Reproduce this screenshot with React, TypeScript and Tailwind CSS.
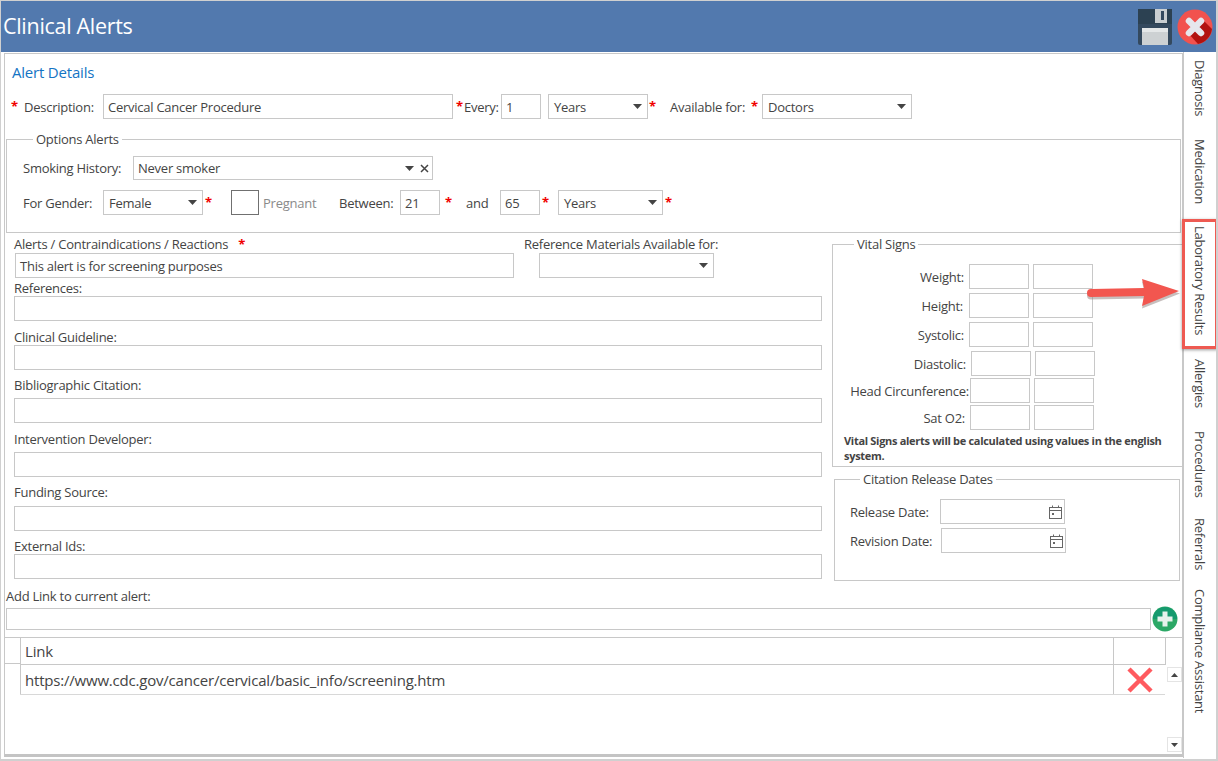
import React from "react";

const box = "border border-[#c8c8c8] bg-white flex items-center shrink-0";

function Star({ className = "" }: { className?: string }) {
  return <span className={"text-[#f00000] font-bold text-[13px] leading-none shrink-0 " + className}>*</span>;
}
function Caret({ className = "" }: { className?: string }) {
  return (
    <svg width="9" height="5" viewBox="0 0 9 5" className={"shrink-0 " + className}>
      <path d="M0 0h9L4.5 5z" fill="#444" />
    </svg>
  );
}
function Input({ className, value = "" }: { className: string; value?: string }) {
  return <div className={box + " pl-[4px] " + className}>{value}</div>;
}
function Select({ className, value = "" }: { className: string; value?: string }) {
  return (
    <div className={box + " pl-[5px] pr-[5px] justify-between " + className}>
      <span>{value}</span>
      <Caret />
    </div>
  );
}
function Cal() {
  return (
    <svg width="13" height="14" viewBox="0 0 13 14" fill="none" stroke="#666" strokeWidth="1">
      <rect x="0.5" y="2.5" width="12" height="11" />
      <path d="M0.5 5.5h12M3.5 0.5v2M9.5 0.5v2" />
      <rect x="3" y="8" width="2" height="2" fill="#666" stroke="none" />
    </svg>
  );
}
function Field({ label, top, gap }: { label: string; top: string; gap: string }) {
  return (
    <>
      <div className={"h-[16px] leading-[16px] " + top}>{label}</div>
      <div className={"h-[25px] w-[808px] border border-[#c8c8c8] bg-white " + gap} />
    </>
  );
}

const vitals = [
  { label: "Weight:", w: "w-[120px]", ml: "ml-[5px]", row: "mt-0" },
  { label: "Height:", w: "w-[119px]", ml: "ml-[6px]", row: "mt-[4px]" },
  { label: "Systolic:", w: "w-[120px]", ml: "ml-[5px]", row: "mt-[4px]" },
  { label: "Diastolic:", w: "w-[122px]", ml: "ml-[5px]", row: "mt-[4px]" },
  { label: "Head Circunference:", w: "w-[125px]", ml: "ml-[1px]", row: "mt-[2px]" },
  { label: "Sat O2:", w: "w-[121px]", ml: "ml-[5px]", row: "mt-[2px]" },
];
const tabs = [
  { t: "Diagnosis", h: "h-[60px]" },
  { t: "Medication", h: "h-[68px]" },
  { t: "Laboratory Results", h: "h-[114px]" },
  { t: "Allergies", h: "h-[53px]" },
  { t: "Procedures", h: "h-[68px]" },
  { t: "Referrals", h: "h-[52px]" },
  { t: "Compliance Assistant", h: "h-[131px]" },
];

export default function App() {
  return (
    <div className="relative w-[1218px] h-[761px] overflow-hidden bg-white text-[#444] text-[13px] leading-[18px] tracking-[-0.25px] border-t border-l border-r-2 border-b-2 border-[#d0d0d0] font-['Open_Sans','Noto_Sans',sans-serif]">
      <header className="h-[51px] bg-[#5279ae] flex items-center justify-between pl-[2px] pr-[3px]">
        <h1 className="text-white text-[21.5px] font-normal tracking-[-0.3px] leading-[30px] -mt-[1px]">Clinical Alerts</h1>
        <div className="flex items-center gap-[5px] mt-[1px]">
          <svg width="34" height="36" viewBox="0 0 34 36">
            <rect width="34" height="36" rx="2" fill="#34495e" />
            <rect x="0" y="0" width="34" height="15" fill="#2c4152" />
            <rect x="17" y="0" width="12" height="14" fill="#c9ced1" />
            <rect x="23" y="2" width="3" height="9" fill="#34495e" />
            <path d="M4 21a2 2 0 0 1 2-2h22a2 2 0 0 1 2 2v15H4z" fill="#cdd1d3" />
            <rect x="4" y="19" width="26" height="4" fill="#e4e7e8" />
          </svg>
          <svg width="36" height="36" viewBox="0 0 36 36">
            <circle cx="18" cy="18" r="17.5" fill="#f2524e" />
            <path d="M11 24 L25 10 L35 20 A17.5 17.5 0 0 1 21 35z" fill="#b2120f" />
            <path d="M12 12 L24 24 M24 12 L12 24" stroke="#e6e7ec" strokeWidth="6.5" strokeLinecap="round" />
          </svg>
        </div>
      </header>

      <div className="flex h-[706px]">
        <main className="ml-[3px] mt-[1px] w-[1179px] h-[704px] border border-[#c8c8c8] border-b-[3px] border-b-[#c4c4c4] bg-white flex flex-col shrink-0">
          <h2 className="mt-[8px] ml-[7px] h-[20px] text-[15px] leading-[20px] font-normal text-[#1474c4] tracking-[-0.2px]">Alert Details</h2>

          <div className="mt-[12px] flex items-center h-[25px] whitespace-nowrap">
            <Star className="ml-[6px] w-[13px]" />
            <span className="w-[79px]">Description:</span>
            <Input className="w-[350px] h-[25px]" value="Cervical Cancer Procedure" />
            <Star className="ml-[3px] w-[8px]" />
            <span className="w-[37px]">Every:</span>
            <Input className="w-[40px] h-[25px]" value="1" />
            <Select className="ml-[7px] w-[100px] h-[25px]" value="Years" />
            <Star className="ml-[1px] w-[21px]" />
            <span className="w-[81px]">Available for:</span>
            <Star className="w-[11px]" />
            <Select className="w-[150px] h-[25px]" value="Doctors" />
          </div>

          <fieldset className="mt-[11px] ml-[1px] w-[1175px] h-[103px] border border-[#c8c8c8] pl-[16px]">
            <legend className="ml-[10px] px-[3px] h-[18px] leading-[18px]">Options Alerts</legend>
            <div className="mt-[8px] flex items-center h-[24px] whitespace-nowrap">
              <span className="w-[110px]">Smoking History:</span>
              <div className={box + " w-[300px] h-[24px] pl-[4px] pr-[3px]"}>
                <span className="flex-1">Never smoker</span>
                <Caret className="mr-[6px]" />
                <svg width="9" height="9" viewBox="0 0 9 9" stroke="#444" strokeWidth="1.5">
                  <path d="M1 1l7 7M8 1L1 8" />
                </svg>
              </div>
            </div>
            <div className="mt-[10px] flex items-center h-[25px] whitespace-nowrap">
              <span className="w-[80px]">For Gender:</span>
              <Select className="w-[100px] h-[25px]" value="Female" />
              <Star className="ml-[2px] w-[26px]" />
              <div className="w-[28px] h-[25px] border border-[#707070] bg-white shrink-0" />
              <span className="ml-[4px] w-[76px] text-[#8a8a8a]">Pregnant</span>
              <span className="w-[61px]">Between:</span>
              <Input className="w-[40px] h-[25px]" value="21" />
              <Star className="ml-[5px] w-[21px]" />
              <span className="w-[34px]">and</span>
              <Input className="w-[40px] h-[25px]" value="65" />
              <Star className="ml-[2px] w-[16px]" />
              <Select className="w-[105px] h-[25px]" value="Years" />
              <Star className="ml-[2px] w-[8px]" />
            </div>
          </fieldset>

          <div className="flex h-[349px]">
            <div className="ml-[9px] w-[818px] shrink-0">
              <div className="flex mt-[3px] whitespace-nowrap">
                <div className="w-[510px]">
                  <div className="h-[17px] leading-[16px]">
                    Alerts / Contraindications / Reactions <Star className="ml-[7px]" />
                  </div>
                  <Input className="ml-[1px] w-[499px] h-[25px]" value="This alert is for screening purposes" />
                </div>
                <div>
                  <div className="h-[17px] leading-[16px]">Reference Materials Available for:</div>
                  <Select className="ml-[15px] w-[175px] h-[25px]" value="" />
                </div>
              </div>
              <Field label="References:" top="mt-[2px]" gap="mt-0" />
              <Field label="Clinical Guideline:" top="mt-[8px]" gap="mt-0" />
              <Field label="Bibliographic Citation:" top="mt-[7px]" gap="mt-[5px]" />
              <Field label="Intervention Developer:" top="mt-[8px]" gap="mt-[5px]" />
              <Field label="Funding Source:" top="mt-[7px]" gap="mt-[6px]" />
              <Field label="External Ids:" top="mt-[7px]" gap="mt-0" />
            </div>
            <div className="flex-1 pt-[2px]">
              <fieldset className="w-[351px] h-[232px] border border-[#c8c8c8] border-r-0 pl-[11px]">
                <legend className="ml-[10px] px-[3px] h-[18px] leading-[18px]">Vital Signs</legend>
                <div className="mt-[11px] flex flex-col whitespace-nowrap">
                  {vitals.map((v) => (
                    <div key={v.label} className={"flex items-center h-[25px] " + v.row}>
                      <span className={"text-right shrink-0 " + v.w}>{v.label}</span>
                      <div className={"w-[60px] h-[25px] border border-[#c8c8c8] " + v.ml} />
                      <div className="ml-[4px] w-[60px] h-[25px] border border-[#c8c8c8]" />
                    </div>
                  ))}
                </div>
                <p className="mt-[3px] w-[330px] text-[11px] leading-[15px] font-bold tracking-[-0.3px]">
                  Vital Signs alerts will be calculated using values in the english system.
                </p>
              </fieldset>
              <fieldset className="mt-[3px] ml-[2px] w-[346px] h-[111px] border border-[#c8c8c8] pl-[15px]">
                <legend className="ml-[10px] px-[3px] h-[18px] leading-[18px]">Citation Release Dates</legend>
                <div className="mt-[11px] flex items-center h-[25px] whitespace-nowrap">
                  <span className="w-[90px]">Release Date:</span>
                  <div className={box + " w-[125px] h-[25px] justify-end pr-[2px]"}><Cal /></div>
                </div>
                <div className="mt-[4px] flex items-center h-[25px] whitespace-nowrap">
                  <span className="w-[91px]">Revision Date:</span>
                  <div className={box + " w-[125px] h-[25px] justify-end pr-[2px]"}><Cal /></div>
                </div>
              </fieldset>
            </div>
          </div>

          <div className="ml-[1px] h-[16px] leading-[16px] mt-[6px]">Add Link to current alert:</div>
          <div className="ml-[1px] mt-[4px] flex items-center h-[22px]">
            <div className="w-[1145px] h-[22px] border border-[#c8c8c8]" />
            <svg width="26" height="26" viewBox="0 0 26 26" className="ml-[1px] -mt-[0px] shrink-0">
              <circle cx="13" cy="13" r="12.5" fill="#2ca866" />
              <path d="M1 13a12 12 0 0 1 24 0z" fill="#159a6e" />
              <path d="M13 5.5v15M5.5 13h15" stroke="#e6f2ec" strokeWidth="5" />
            </svg>
          </div>

          <div className="mt-[7px] flex-1 flex border-t border-[#c8c8c8] text-[15px] tracking-[-0.2px]">
            <div className="w-[15px] shrink-0">
              <div className="h-[26px] border-b border-[#c8c8c8]" />
            </div>
            <div className="w-[1145px] shrink-0">
              <div className="h-[27px] flex border-b border-[#c8c8c8]">
                <div className="w-[1094px] pl-[4px] border-l border-r border-[#c8c8c8] flex items-center">Link</div>
                <div className="flex-1" />
              </div>
              <div className="h-[30px] flex border-b border-[#d8d8d8]">
                <div className="w-[1094px] pl-[4px] border-l border-r border-[#c8c8c8] flex items-center">
                  https://www.cdc.gov/cancer/cervical/basic_info/screening.htm
                </div>
                <div className="flex-1 flex items-center justify-center">
                  <svg width="26" height="26" viewBox="0 0 26 26">
                    <path d="M2 2l22 22M24 2L2 24" stroke="#ff5a5f" strokeWidth="4.5" />
                  </svg>
                </div>
              </div>
            </div>
            <div className="flex-1 flex flex-col">
              <div className="h-[27px] border-l border-[#c8c8c8]" />
              <div className="flex-1 flex flex-col justify-between items-center pt-[2px] pb-[2px] pl-[1px]">
                <div className="w-[15px] h-[15px] border border-[#e4e4e4] flex items-center justify-center">
                  <svg width="7" height="4" viewBox="0 0 7 4"><path d="M0 4h7L3.5 0z" fill="#444" /></svg>
                </div>
                <div className="w-[15px] h-[15px] border border-[#e4e4e4] flex items-center justify-center">
                  <svg width="7" height="4" viewBox="0 0 7 4"><path d="M0 0h7L3.5 4z" fill="#444" /></svg>
                </div>
              </div>
            </div>
          </div>
        </main>

        <nav className="flex-1 border-l border-[#c8c8c8] ml-[0px] flex flex-col items-center pt-[8px] gap-[19px] text-[13px]">
          {tabs.map((t) => (
            <div key={t.t} className={"[writing-mode:vertical-rl] whitespace-nowrap leading-[18px] " + t.h}>{t.t}</div>
          ))}
        </nav>
      </div>

      {/* annotation overlays */}
      <div className="absolute left-[1181px] top-[218px] w-[36px] h-[130px] border-[3px] border-[#ee5a52] shadow-[0_1px_3px_rgba(0,0,0,0.4)]" />
      <svg className="absolute left-[1085px] top-[276px]" width="96" height="34" viewBox="0 0 96 34">
        <path d="M5 13 L58 12 L56 3 L94 15 L56 30 L58 20 L5 21 a4 4 0 0 1 0 -8z" fill="#90807e" opacity="0.5" transform="translate(0,1.5)" />
        <path d="M5 12 L58 11 L56 2 L93 14 L56 29 L58 19 L5 20 a4 4 0 0 1 0 -8z" fill="#f2564f" />
      </svg>
    </div>
  );
}
